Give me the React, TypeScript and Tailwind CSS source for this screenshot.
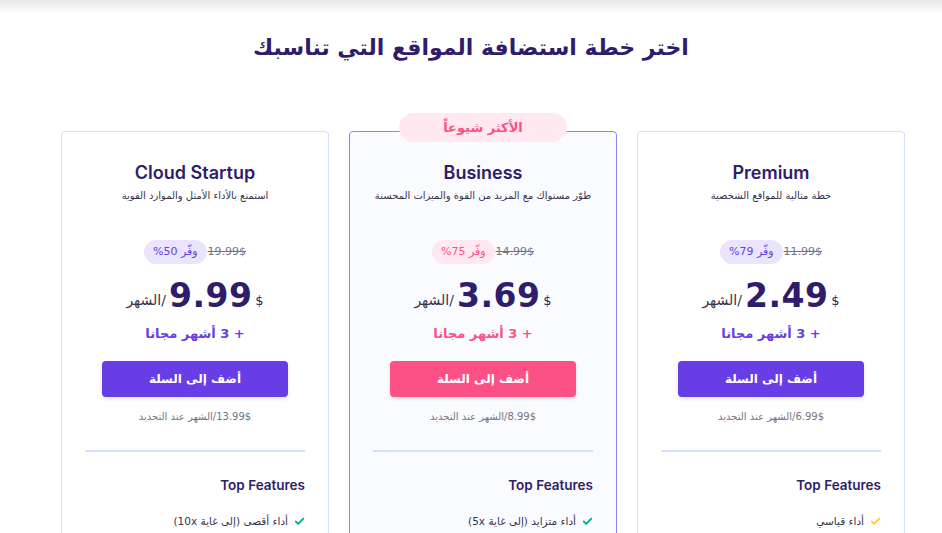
import { Check } from 'lucide-react'

type Plan = {
  name: string
  subtitle: string
  oldPrice: string
  save: string
  price: string
  renewal: string
  feature: string
  popular?: boolean
  checkColor: string
}

const plans: Plan[] = [
  {
    name: 'Premium',
    subtitle: 'خطة مثالية للمواقع الشخصية',
    oldPrice: '11.99$',
    save: 'وفّر 79%',
    price: '2.49',
    renewal: '6.99$/الشهر عند التجديد',
    feature: 'أداء قياسي',
    checkColor: 'text-[#ffcd35]',
  },
  {
    name: 'Business',
    subtitle: 'طوّر مستواك مع المزيد من القوة والميزات المحسنة',
    oldPrice: '14.99$',
    save: 'وفّر 75%',
    price: '3.69',
    renewal: '8.99$/الشهر عند التجديد',
    feature: 'أداء متزايد (إلى غاية 5x)',
    popular: true,
    checkColor: 'text-[#00b090]',
  },
  {
    name: 'Cloud Startup',
    subtitle: 'استمتع بالأداء الأمثل والموارد القوية',
    oldPrice: '19.99$',
    save: 'وفّر 50%',
    price: '9.99',
    renewal: '13.99$/الشهر عند التجديد',
    feature: 'أداء أقصى (إلى غاية 10x)',
    checkColor: 'text-[#00b090]',
  },
]

function PlanCard({ plan }: { plan: Plan }) {
  const accentText = plan.popular ? 'text-[#fc5185]' : 'text-[#673de6]'
  return (
    <div
      className={`relative flex w-[268px] flex-col items-center rounded-[4px] border px-[23px] ${
        plan.popular ? 'border-[#8c85ff] bg-[#fafbff]' : 'border-[#d5dfff] bg-white'
      }`}
    >
      {plan.popular && (
        <div className="absolute top-[-19px] left-1/2 flex h-[29px] w-[168px] -translate-x-1/2 items-center justify-center rounded-full bg-[#ffe8ef] text-[13px] font-bold text-[#fc5185]">
          الأكثر شيوعاً
        </div>
      )}
      <h2 className="mt-[28px] h-[26px] text-[18px] leading-[26px] font-semibold text-[#2f1c6a] font-['Inter',sans-serif]">
        {plan.name}
      </h2>
      <p className="mt-[2px] h-[16px] whitespace-nowrap text-[10px] leading-[16px] text-[#36344d]">{plan.subtitle}</p>

      <div className="mt-[36px] flex h-[24px] items-center gap-[1px]">
        <span className="text-[11px] text-[#727586] line-through">{plan.oldPrice}</span>
        <span
          className={`flex h-[24px] items-center rounded-full px-[9px] text-[11px] ${
            plan.popular ? 'bg-[#ffe8ef] text-[#fc5185]' : 'bg-[#ebe4ff] text-[#673de6]'
          }`}
        >
          {plan.save}
        </span>
      </div>

      <div className="mt-[16px] flex h-[32px] items-end gap-[3px]">
        <span className="mb-[2px] text-[13px] text-[#2f1c6a]">$</span>
        <span dir="ltr" className="text-[33px] leading-[32px] font-bold tracking-[0.5px] text-[#2f1c6a]">
          {plan.price}
        </span>
        <span className="mb-[1px] text-[14px] text-[#36344d]">/الشهر</span>
      </div>

      <p className={`mt-[13px] text-[13px] leading-[18px] font-bold ${accentText}`}>+ 3 أشهر مجانا</p>

      <button
        className={`mt-[18px] h-[36px] w-[186px] rounded-[4px] text-[12px] font-bold text-white shadow-[0_2px_4px_rgba(0,0,0,0.12)] ${
          plan.popular ? 'bg-[#fc5185]' : 'bg-[#673de6]'
        }`}
      >
        أضف إلى السلة
      </button>

      <p className="mt-[13px] text-[10px] leading-[14px] text-[#727586]">{plan.renewal}</p>

      <div className="mt-[26px] h-[2px] w-full bg-[#d5dfff]" />

      <h3 className="mt-[24px] self-start text-[13.5px] leading-[18px] font-semibold text-[#2f1c6a] font-['Inter',sans-serif]">
        Top Features
      </h3>

      <div className="mt-[20px] flex items-center gap-[6px] self-start pb-[20px] text-[10.5px] text-[#36344d]">
        <Check className={`h-[11px] w-[11px] ${plan.checkColor}`} strokeWidth={4} />
        <span>{plan.feature}</span>
      </div>
    </div>
  )
}

export default function App() {
  return (
    <div
      dir="rtl"
      className="min-h-[533px] w-full overflow-hidden bg-white font-['DejaVu_Sans','Noto_Sans',sans-serif]"
    >
      <div className="h-[14px] bg-gradient-to-b from-[#e8e8e8] to-white" />
      <h1 className="mt-[19px] text-center text-[22px] leading-[30px] font-bold text-[#2f1c6a]">
        اختر خطة استضافة المواقع التي تناسبك
      </h1>
      <div className="mt-[68px] flex justify-center gap-[20px] pl-[24px]">
        {plans.map((p) => (
          <PlanCard key={p.name} plan={p} />
        ))}
      </div>
    </div>
  )
}
